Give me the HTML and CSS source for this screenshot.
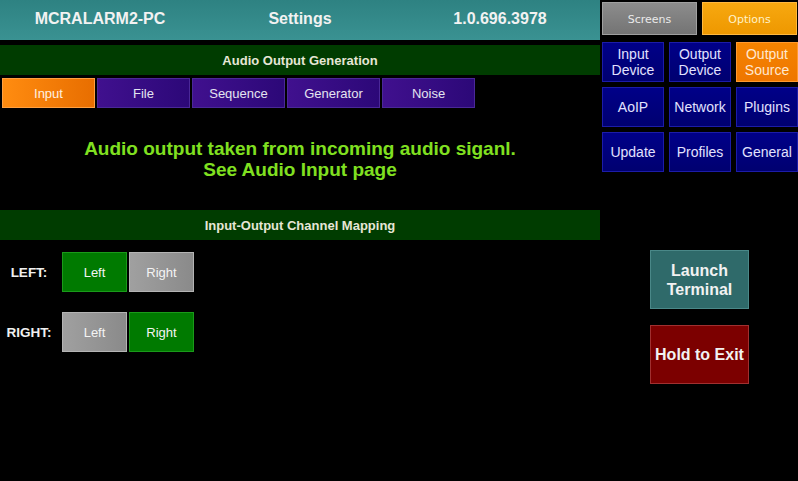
FILE: index.html
```html
<!DOCTYPE html>
<html>
<head>
<meta charset="utf-8">
<link rel="stylesheet" href="styles.css">
</head>
<body>
<div class="app">
  <div class="main">
    <div class="header">
      <div class="hcell">MCRALARM2-PC</div>
      <div class="hcell">Settings</div>
      <div class="hcell">1.0.696.3978</div>
    </div>
    <div class="section-bar first">Audio Output Generation</div>
    <div class="tabs">
      <div class="tab active">Input</div>
      <div class="tab">File</div>
      <div class="tab">Sequence</div>
      <div class="tab">Generator</div>
      <div class="tab">Noise</div>
    </div>
    <div class="message">Audio output taken from incoming audio siganl.<br>See Audio Input page</div>
    <div class="section-bar">Input-Output Channel Mapping</div>
    <div class="mapping">
      <div class="map-row">
        <div class="map-label">LEFT:</div>
        <div class="map-btn on">Left</div>
        <div class="map-btn off">Right</div>
      </div>
      <div class="map-row">
        <div class="map-label">RIGHT:</div>
        <div class="map-btn off">Left</div>
        <div class="map-btn on">Right</div>
      </div>
    </div>
  </div>
  <div class="side">
    <div class="nav">
      <div class="nav-btn screens">Screens</div>
      <div class="nav-btn options">Options</div>
    </div>
    <div class="opt-grid">
      <div class="opt">Input<br>Device</div>
      <div class="opt">Output<br>Device</div>
      <div class="opt active">Output<br>Source</div>
      <div class="opt">AoIP</div>
      <div class="opt">Network</div>
      <div class="opt">Plugins</div>
      <div class="opt">Update</div>
      <div class="opt">Profiles</div>
      <div class="opt">General</div>
    </div>
    <div class="big-btn terminal">Launch<br>Terminal</div>
    <div class="big-btn exit">Hold to Exit</div>
  </div>
</div>
</body>
</html>
```

FILE: styles.css
```css
* { box-sizing: border-box; }
html, body {
  margin: 0;
  padding: 0;
  background: #000;
  width: 798px;
  height: 481px;
  overflow: hidden;
  font-family: "Liberation Sans", Arial, sans-serif;
}
.app {
  display: flex;
  width: 798px;
  height: 481px;
}
.main {
  width: 600px;
  display: flex;
  flex-direction: column;
}
.header {
  height: 40px;
  display: grid;
  grid-template-columns: repeat(3, 1fr);
  align-items: center;
  background: linear-gradient(#2e8282, #3a9292);
  color: #f2f2f2;
  font-weight: bold;
  font-size: 16px;
}
.hcell { text-align: center; padding-bottom: 2px; }
.section-bar {
  height: 30px;
  background: #003c00;
  color: #e6e6d6;
  font-weight: bold;
  font-size: 13px;
  display: flex;
  align-items: center;
  justify-content: center;
}
.section-bar.first { margin-top: 5px; }
.tabs {
  display: flex;
  gap: 2px;
  padding-left: 2px;
  margin-top: 3px;
  height: 30px;
}
.tab {
  width: 93px;
  height: 30px;
  background: linear-gradient(90deg, #40108e, #2c0878);
  border: 1px solid #4a2898;
  color: #e4e4f0;
  font-size: 13px;
  display: flex;
  align-items: center;
  justify-content: center;
}
.tab.active {
  background: linear-gradient(90deg, #ff8c10, #e86e00);
  border-color: #ffa040;
  color: #fff0e0;
}
.message {
  height: 102px;
  padding-top: 30px;
  text-align: center;
  color: #80e020;
  font-weight: bold;
  font-size: 19px;
  line-height: 21px;
}
.mapping {
  display: flex;
  flex-direction: column;
  gap: 20px;
  padding-top: 12px;
}
.map-row {
  display: flex;
  align-items: center;
  gap: 2px;
}
.map-label {
  width: 60px;
  text-align: center;
  color: #f0f0f0;
  font-weight: bold;
  font-size: 13.5px;
  padding-right: 2px;
}
.map-btn {
  width: 65px;
  height: 40px;
  display: flex;
  align-items: center;
  justify-content: center;
  font-size: 13px;
  color: #f4f4f4;
}
.map-btn.on {
  background: #007a00;
  border: 1px solid #1a9a1a;
}
.map-btn.off {
  background: linear-gradient(90deg, #a0a0a0, #8a8a8a);
  border: 1px solid #b4b4b4;
}
.side {
  width: 198px;
  padding-left: 2px;
  padding-top: 2px;
  display: flex;
  flex-direction: column;
}
.nav {
  display: flex;
  gap: 5px;
  height: 33px;
}
.nav-btn {
  width: 95px;
  display: flex;
  align-items: center;
  justify-content: center;
  font-family: "DejaVu Sans", sans-serif;
  font-size: 11px;
  padding-top: 1px;
}
.nav-btn.screens {
  background: linear-gradient(#8c8c8c, #747474);
  border: 1px solid #a0a0a0;
  color: #eaeaea;
}
.nav-btn.options {
  background: linear-gradient(#f7a810, #ee9800);
  border: 1px solid #ffb840;
  color: #fff2c8;
}
.opt-grid {
  margin-top: 7px;
  display: grid;
  grid-template-columns: 62px 62px 62px;
  grid-auto-rows: 40px;
  column-gap: 5px;
  row-gap: 5px;
}
.opt {
  background: linear-gradient(#000088, #000070);
  border: 1px solid #1c1ca8;
  color: #e2e2ff;
  font-size: 14px;
  line-height: 16px;
  display: flex;
  align-items: center;
  justify-content: center;
  text-align: center;
}
.opt.active {
  background: linear-gradient(#f58400, #ee7600);
  border-color: #ff9a30;
  color: #ffe8d0;
}
.big-btn {
  width: 99px;
  height: 59px;
  margin-left: 48px;
  display: flex;
  align-items: center;
  justify-content: center;
  text-align: center;
  color: #f2f2f2;
  font-weight: bold;
  font-size: 16px;
  line-height: 19px;
}
.big-btn.terminal {
  margin-top: 78px;
  background: #2f6a6a;
  border: 1px solid #4a8888;
}
.big-btn.exit {
  margin-top: 16px;
  background: #7c0000;
  border: 1px solid #a03030;
}
```
